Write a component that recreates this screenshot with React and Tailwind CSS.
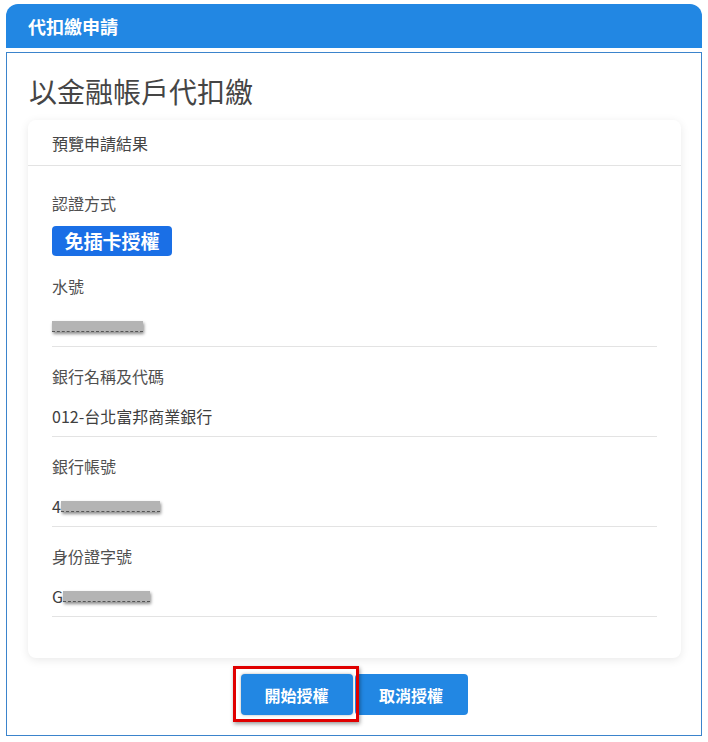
import React from "react";

const font = { fontFamily: '"Noto Sans CJK TC", "Noto Sans", sans-serif' };

function Blur({ w }) {
  return (
    <span
      className="inline-block h-[11px] bg-[#b4b4b4] shadow-[1px_2px_3px_rgba(0,0,0,0.45)] border-b border-dashed border-[#555] align-middle"
      style={{ width: w }}
    />
  );
}

function Field({ label, children, first }) {
  return (
    <div className="border-b border-[#e3e3e3] pb-[9px]">
      <div className={`${first ? "mt-[19px]" : "mt-[18px]"} text-[16px] leading-[22px] text-[#505050]`}>{label}</div>
      <div className="mt-[18px] h-[22px] text-[16px] leading-[22px] text-[#404040] flex items-center">{children}</div>
    </div>
  );
}

export default function App() {
  return (
    <div className="w-[708px] h-[742px] bg-white pt-[4px] px-[6px]" style={font}>
      <div className="h-[44px] bg-[#2287e3] rounded-t-[12px] pl-[22px] flex items-center text-white font-bold text-[18px]">
        代扣繳申請
      </div>
      <div className="mt-[4px] border border-[#3b84cc] pb-[20px]">
        <div className="pt-[19px] pl-[22px] text-[28px] leading-[38px] text-[#454545]">以金融帳戶代扣繳</div>
        <div className="mt-[10px] ml-[21px] mr-[20px] bg-white rounded-[8px] shadow-[0_2px_10px_rgba(0,0,0,0.09)]">
          <div className="h-[46px] pl-[24px] flex items-center border-b border-[#e3e3e3] text-[16px] text-[#454545]">
            預覽申請結果
          </div>
          <div className="px-[24px] pt-[26px] pb-[41px]">
            <div className="text-[16px] leading-[22px] text-[#505050]">認證方式</div>
            <div className="mt-[12px] inline-flex h-[30px] w-[120px] items-center justify-center rounded-[4px] bg-[#1a6fe6] text-white font-bold text-[19px]">
              免插卡授權
            </div>
            <Field label="水號" first>
              <Blur w={91} />
            </Field>
            <Field label="銀行名稱及代碼">012-台北富邦商業銀行</Field>
            <Field label="銀行帳號">
              <span>4</span>
              <Blur w={99} />
            </Field>
            <Field label="身份證字號">
              <span>G</span>
              <Blur w={87} />
            </Field>
          </div>
        </div>
        <div className="mt-[16px] flex justify-center gap-[2px]">
          <div className="relative">
            <span className="absolute left-[-8px] right-[-6px] top-[-8px] bottom-[-7px] border-[3px] border-[#e00000] shadow-[1px_2px_4px_rgba(0,0,0,0.4)]" />
            <button className="relative w-[112px] h-[41px] rounded-[4px] bg-[#2287e3] text-white font-bold text-[16px] shadow-[0_0_3px_rgba(0,0,0,0.3)]">
              開始授權
            </button>
          </div>
          <button className="w-[113px] h-[41px] rounded-[4px] bg-[#2287e3] text-white font-bold text-[16px]">
            取消授權
          </button>
        </div>
      </div>
    </div>
  );
}
